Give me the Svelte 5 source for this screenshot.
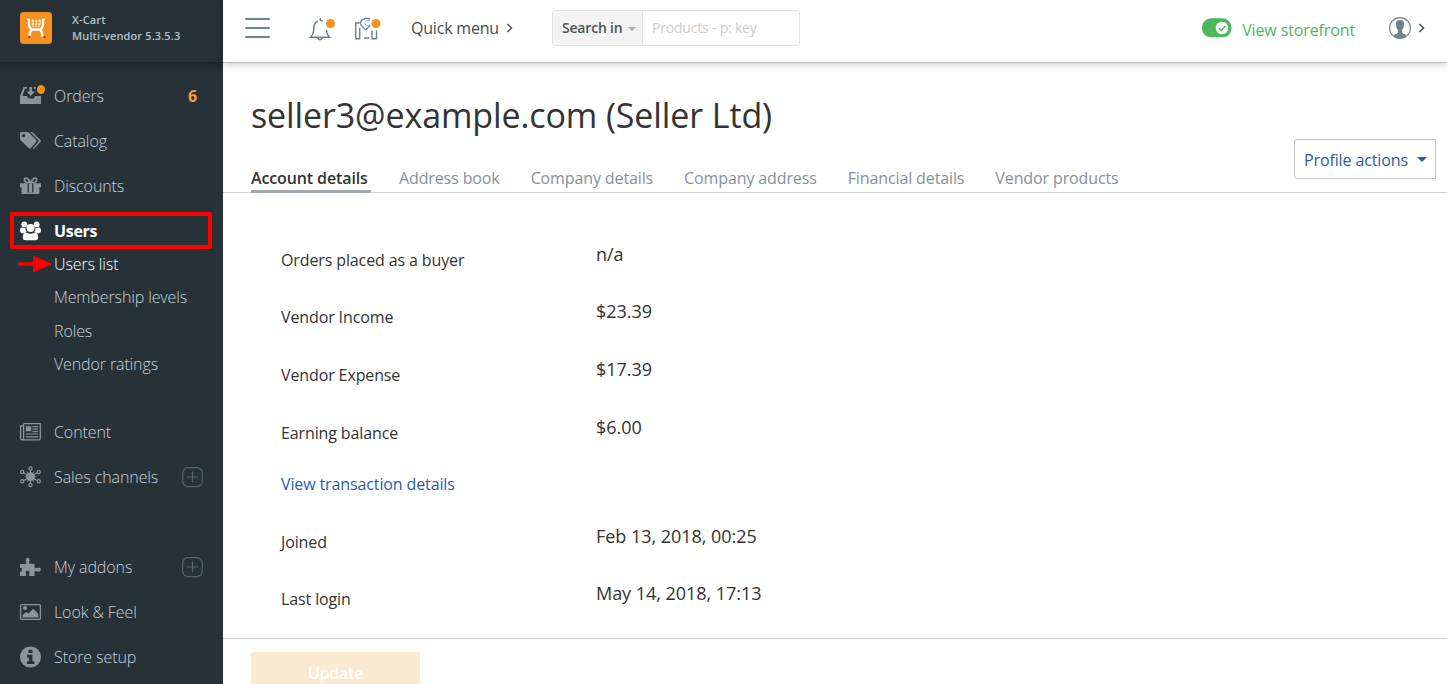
<script>
  const top = [
    { label: 'Orders', icon: 'orders', count: '6' },
    { label: 'Catalog', icon: 'tags' },
    { label: 'Discounts', icon: 'gift' },
    { label: 'Users', icon: 'users', active: true }
  ];
  const sub = ['Users list', 'Membership levels', 'Roles', 'Vendor ratings'];
  const middle = [
    { label: 'Content', icon: 'news' },
    { label: 'Sales channels', icon: 'hub', plus: true }
  ];
  const bottom = [
    { label: 'My addons', icon: 'puzzle', plus: true },
    { label: 'Look & Feel', icon: 'image' },
    { label: 'Store setup', icon: 'info' }
  ];
  const tabs = ['Account details', 'Address book', 'Company details', 'Company address', 'Financial details', 'Vendor products'];
  const rows = [
    ['Orders placed as a buyer', 'n/a'],
    ['Vendor Income', '$23.39'],
    ['Vendor Expense', '$17.39'],
    ['Earning balance', '$6.00']
  ];
  const dates = [
    ['Joined', 'Feb 13, 2018, 00:25'],
    ['Last login', 'May 14, 2018, 17:13']
  ];
  const satellites = [[11.5, 3.5], [19.8, 7], [19.8, 16.3], [11.5, 20], [3.2, 16.3], [3.2, 7]];
</script>

{#snippet icon(name)}
  <svg class="icon" width="26" height="24" viewBox="0 0 26 24" fill="currentColor">
    {#if name === 'orders'}
      <path d="M1 12 4.5 3H8v1.8H5.8L3.5 12H8l1.5 2.5h5L16 12h6v8H1z" />
      <path d="M10.3 3h2.8v4.5H16L11.7 12 7.5 7.5h2.8zM14.8 3h2v1.8h-2z" />
      <ellipse cx="22" cy="5.5" rx="4" ry="4.5" fill="#f5921f" />
    {:else if name === 'tags'}
      <path fill-rule="evenodd" d="M1 4.2Q1 3 2.2 3h6q1 0 1.8.8l7.3 7.3q.8.9 0 1.8l-5.6 6.3q-.8.8-1.7 0L1.8 11.5Q1 10.7 1 9.8zM4.6 5a1.6 1.6 0 1 0 .01 0z" />
      <path d="M11 3h1.6q.8 0 1.5.7l7.5 7.5q.8.8 0 1.6L15.5 19.6q-.9.8-1.9-.1l5.7-6.4q.9-1 0-2z" />
    {:else if name === 'gift'}
      <path d="M1 9.2h7.6v4H1zM2.5 13.2h6.1V20H3.5q-1 0-1-1zM14.4 9.2H22v4h-7.6zM14.4 13.2h6V19q0 1-1 1h-5z" />
      <path d="M9.9 9.2h3.2v9H9.9zM8 18.5h7V20H8z" />
      <path d="M11.3 9C9 4 7.5 3.6 6.3 4.2 4.2 5.5 6 8.5 8 8.5h7c2 0 3.8-3 1.7-4.3C15.5 3.6 14 4 11.5 9" fill="none" stroke="currentColor" stroke-width="1.7" />
    {:else if name === 'users'}
      <circle cx="5.3" cy="5.5" r="2.9" /><circle cx="17.7" cy="5.5" r="2.9" />
      <path d="M1 11.4q0-3 2-3 2 1.3 3.4.4-.2 2.4 1.3 4.2-1.4.2-2.2 1.2H2.7Q1 13.4 1 11.4zM22 11.4q0-3-2-3-2 1.3-3.4.4.2 2.4-1.3 4.2 1.4.2 2.2 1.2h2.8Q22 13.4 22 11.4z" />
      <circle cx="11.5" cy="8.9" r="4" />
      <path d="M3.8 18.8q0-5.3 3.5-5.3 4.2 2.4 8.4 0 3.5 0 3.5 5.3 0 2.4-2.6 2.4H6.4q-2.6 0-2.6-2.4z" />
    {:else if name === 'news'}
      <path d="M4.6 3.7h16.7v14.8q0 1.3-1.2 1.3H2.8q-1.2 0-1.2-1.4V6h3M4.6 4v14.3q0 1.5-1.5 1.5" fill="none" stroke="currentColor" stroke-width="1.3" />
      <path d="M6.8 6.2h5.4v5H6.8zM13.5 6h5.6v1.2h-5.6zM13.5 8.6h5.6v1.2h-5.6zM13.5 11h5.6v1.2h-5.6zM6.8 13.4h12.3v1.2H6.8zM6.8 16.2h12.3v1.2H6.8z" />
    {:else if name === 'hub'}
      <circle cx="11.5" cy="11.7" r="4.4" />
      {#each satellites as [x, y]}
        <path d="M11.5 11.7L{11.5 + (x - 11.5) * 0.82} {11.7 + (y - 11.7) * 0.82}" stroke="currentColor" stroke-width="1.1" />
        <circle cx={x} cy={y} r="1.6" fill="#263238" stroke="currentColor" stroke-width="1.2" />
      {/each}
      <path d="M5.7 11.7h11.6M8 6.3l7 10.8M15 6.3L8 17.1" stroke="currentColor" stroke-width=".8" />
    {:else if name === 'puzzle'}
      <path d="M1 9.5h5.2q1.6 0 1.2-1.3-.8-1-.7-2.2Q6.9 3.5 8.6 3.3q2 .1 2.1 2.3 0 1-.8 2.1-.5 1.5 1.1 1.6h4.6v3.3q.2 1.8 1.8 1 3.5-1.6 4.6 1.1-.3 3.6-3.7 2.4-2.5-1.2-2.7.8v3.6h-5q-1-.3-.6-1.4 1.6-3.2-1-3.7-3.2.1-2 3.2.7 1.3-.2 1.9H1v-4.2h1.8q-.2-2 .1-3.7H1z" transform="translate(0 -.6)" />
    {:else if name === 'image'}
      <rect x="1.6" y="4.6" width="19.8" height="14.8" rx="1" fill="none" stroke="currentColor" stroke-width="1.3" />
      <circle cx="6" cy="8" r="2" /><path d="M3.7 17.4v-2.7l3.8-2.8 2 1.7L14.2 8.8l5.1 5v3.6z" />
    {:else}
      <circle cx="11.5" cy="12" r="10.5" />
      <path class="cut" d="M9.5 4.7h4v3.2h-4zM8 9.8h5.5v6.5h1.8v2.6H8v-2.6h1.9v-3.9H8z" />
    {/if}
  </svg>
{/snippet}

{#snippet item(it)}
  <a class="item" class:active={it.active}>
    {@render icon(it.icon)}
    <span class="label">{it.label}</span>
    {#if it.count}<b class="count">{it.count}</b>{/if}
    {#if it.plus}
      <svg class="plus" width="21" height="21" viewBox="0 0 21 21" fill="none" stroke="#57646b" stroke-width="1.2"><rect x=".7" y=".6" width="19.6" height="19" rx="5.5" /><path d="M5 10h11M10.5 4.5v11" /></svg>
    {/if}
  </a>
{/snippet}

<div class="page">
  <aside>
    <div class="brand">
      <svg width="32" height="32" viewBox="0 0 32 32">
        <rect width="32" height="32" rx="4" fill="#f5921f" />
        <path d="M9 7.3V12q0 4.4 3.5 5.5h7q3.5-1.1 3.5-5.5V7.3M12.5 17.5Q9.6 18.8 9.6 24.4M19.5 17.5q2.9 1.3 2.9 6.9M12.5 17.5h7" fill="none" stroke="#fff" stroke-width="2.4" />
        <path d="M7 7.4h3M22 7.4h3" stroke="#fff" stroke-width="1.2" />
        <path d="M11.9 8.8h8.6M11.9 11.8h8.6" stroke="#fff" stroke-width="2" stroke-dasharray="2 1.3" />
        <path d="M12.3 14.2h7.6" stroke="#fff" stroke-width="1" stroke-dasharray="2 .8" />
        <circle cx="9.3" cy="25" r="1.2" fill="#b83a17" /><circle cx="24.6" cy="25" r="1.2" fill="#b83a17" />
      </svg>
      <div class="version">X-Cart<br />Multi-vendor 5.3.5.3</div>
    </div>
    <nav>
      {#each top as it}{@render item(it)}{/each}
      <div class="sub">
        {#each sub as s, i}<a class:current={i === 0}>{s}</a>{/each}
      </div>
      <div class="group">{#each middle as it}{@render item(it)}{/each}</div>
      <div class="group last">{#each bottom as it}{@render item(it)}{/each}</div>
      <div class="frame"></div>
      <svg class="arrow" width="36" height="18" viewBox="0 0 36 18" fill="#f00"><path d="M2 7.2h14V0.5L35.5 9 16 17.5v-6.7H2q-2-1.8 0-3.6z" /></svg>
    </nav>
  </aside>

  <section>
    <header>
      <svg class="burger" width="26" height="22" viewBox="0 0 26 22" stroke="#6d838f" stroke-width="2" stroke-linecap="round"><path d="M1 2h23M1 11h23M1 20h23" /></svg>
      <svg class="bell" width="28" height="26" viewBox="0 0 28 26" fill="none" stroke="#6d838f" stroke-width="1.5">
        <path d="M9 4.2Q5.1 5.8 4.8 10v3.2Q4.6 17 1.4 20.3h19.2Q18 17.5 17.6 14v-1.2M11.3 1v2.2q1.6 0 2.2 1.3M8.3 20.6q2.6 4.2 5.4 0" />
        <circle cx="21.5" cy="6.5" r="4.5" fill="#f5921f" stroke="none" />
      </svg>
      <svg class="map" width="28" height="26" viewBox="0 0 28 26" fill="none" stroke="#6d838f" stroke-width="1.4">
        <path d="M5.2 6H1.7v15.7h4V10.8M18 13.5v8.2h4.5v-8.2M10 21h5.3M16 2.4Q14 1 11.2 1.5 7 2.4 6.2 6.4q.4 1.6 5.6 6.4l4.2-4.4" />
        <path d="M16 3.6q-3.6-.8-4.8.8-1 2.2.5 3.6 1.6 1 3.6.2" stroke-width=".8" opacity=".65" />
        <circle cx="22" cy="6.5" r="4.5" fill="#f5921f" stroke="none" />
      </svg>
      <span class="quick">Quick menu</span>
      <svg class="chev" width="7" height="10" viewBox="0 0 7 10"><path d="M1.5 1l4 4-4 4" fill="none" stroke="#444c50" stroke-width="1.4" /></svg>
      <div class="search">
        <span class="scope"><span>Search in</span><i></i></span><span class="query">Products - p: key</span>
      </div>
      <svg class="toggle" width="30" height="20" viewBox="0 0 30 20"><rect y=".3" width="29.5" height="19" rx="9" fill="#4cb85c" /><circle cx="20" cy="10" r="6.3" fill="#fff" /><path d="M16.7 10l2.5 2.4 4.2-4.5" fill="none" stroke="#4cb85c" stroke-width="1.5" /></svg>
      <span class="store">View storefront</span>
      <svg class="avatar" width="22" height="22" viewBox="0 0 22 22">
        <circle cx="11" cy="11" r="10.4" fill="#fff" stroke="#6d838f" stroke-width="1.1" />
        <path d="M11 3.1q4.2.1 4 4.2.1 3.8-1.8 5.5v2.6q.3 1.2 4.3 2.2Q15.2 21.4 11 21.5 6.8 21.4 4.5 17.6q4-1 4.3-2.2v-2.6Q6.9 11.1 7 7.3 6.8 3.2 11 3.1z" fill="#6d838f" />
      </svg>
      <svg class="chev end" width="7" height="10" viewBox="0 0 7 10"><path d="M1.5 1l4 4-4 4" fill="none" stroke="#444c50" stroke-width="1.5" /></svg>
    </header>

    <main>
      <div class="titlebar">
        <div>
          <h1>seller3@example.com (Seller Ltd)</h1>
          <div class="tabs">
            {#each tabs as t, i}<a class:selected={i === 0}>{t}</a>{/each}
          </div>
        </div>
        <button class="actions"><span>Profile actions</span><i></i></button>
      </div>
      <div class="details">
        {#each rows as [k, v]}<div class="row"><span class="key">{k}</span><span class="val">{v}</span></div>{/each}
        <a class="link"><span class="key">View transaction details</span></a>
        {#each dates as [k, v]}<div class="row"><span class="key">{k}</span><span class="val">{v}</span></div>{/each}
      </div>
      <footer><button class="update">Update</button></footer>
    </main>
  </section>
</div>

<style>
  :global(body) { overflow: hidden; background: #fff; }
  .page { display: grid; grid-template-columns: 223px 1fr; height: 684px; overflow: hidden; font-family: 'Open Sans', sans-serif; font-size: 16px; letter-spacing: -0.12px; color: #333; }
  .page * { box-sizing: border-box; }
  svg { display: block; flex: none; }
  span, a, button { white-space: nowrap; }
  aside { background: #263238; color: #c6d1da; height: 684px; overflow: hidden; }
  .brand { height: 62px; display: flex; padding: 12px 0 0 20px; }
  .version { margin: 0 0 0 20px; font-size: 11px; line-height: 16px; font-weight: 600; letter-spacing: 0.13px; color: #b3c0ca; white-space: nowrap; }
  nav { position: relative; height: 622px; padding-top: 11px; background: linear-gradient(#1b2327, #263238 10px); }
  .item { display: flex; align-items: center; height: 45px; padding: 1px 20px 0 19px; font-weight: 300; }
  .icon { width: 26px; margin-right: 9px; color: #8a949e; overflow: visible; }
  .cut { fill: #263238; }
  .label { flex: 1; letter-spacing: -0.09px; }
  .active { font-weight: 700; color: #fff; }
  .active .label { letter-spacing: -0.3px; }
  .active .icon { color: #fff; }
  .count { color: #ff9a35; font-weight: 700; margin-right: 6px; }
  .sub { display: flex; flex-direction: column; margin-top: -6px; height: 134px; padding: 1px 0 0 54px; }
  .sub a { flex: none; height: 33.3px; line-height: 33.3px; font-weight: 300; }
  .sub .current { color: #fff; }
  .group { margin-top: 28px; }
  .group.last { margin-top: 45px; }
  .frame { position: absolute; left: 10px; top: 150px; width: 202px; height: 37px; border: 4px solid #f00; border-radius: 2px; }
  .arrow { position: absolute; left: 17px; top: 193px; }

  section { min-width: 0; }
  header { height: 63px; display: flex; align-items: center; border-bottom: 1px solid #b9bcbb; padding: 0 22px 6px 22px; box-shadow: 0 1px 9px rgba(0, 0, 0, 0.22); }
  .bell { margin: 4px 0 0 38px; }
  .map { margin: 4px 0 0 17px; }
  .quick { width: 88px; margin-left: 29px; color: #444c50; letter-spacing: -0.2px; }
  .chev { margin-left: 7px; }
  .search { display: flex; width: 248px; height: 36px; margin-left: 39px; border: 1px solid #e3e3e3; border-radius: 3px; font-size: 14px; line-height: 34px; letter-spacing: -0.2px; overflow: hidden; }
  .scope { display: flex; align-items: center; width: 90px; padding-left: 9px; background: #f3f3f3; border-right: 1px solid #e3e3e3; color: #4d5458; font-weight: 600; }
  i { width: 0; height: 0; border: 4px solid transparent; border-bottom: 0; border-top-color: #aaa; margin: 2px 0 0 6px; }
  .query { padding-left: 9px; color: #ccc; }
  .toggle { margin-left: auto; }
  .store { margin: 3px 0 0 10px; color: #4cb85c; }
  .avatar { margin-left: 34px; }

  main { height: 621px; display: flex; flex-direction: column; }
  .titlebar { display: flex; justify-content: space-between; height: 130px; padding: 28px 11px 0 28px; border-bottom: 1px solid #d2d2d2; }
  h1 { margin: 0; font-size: 34px; line-height: 48px; font-weight: 400; letter-spacing: -0.11px; white-space: nowrap; }
  .tabs { display: flex; margin-top: 25px; color: #84929b; }
  .tabs a { height: 29px; line-height: 28px; margin-right: 31px; }
  .tabs .selected { color: #333; font-weight: 600; width: 120px; margin-right: 28px; border-bottom: 3px solid #a1a9b1; }
  .actions { display: flex; align-items: center; margin-top: 48px; width: 142px; height: 40px; padding: 2px 9px 0; background: #fff; border: 1px solid #c6c6c6; border-radius: 3px 0 0 3px; font: inherit; letter-spacing: inherit; color: #2a5caa; }
  .actions i { border-width: 5px; border-bottom: 0; border-top-color: #2a5caa; margin: -2px 0 0 9px; }
  .details { flex: 1; padding: 37.8px 0 0 58px; }
  .row { height: 57.6px; display: grid; grid-template-columns: 315px auto; justify-content: start; align-items: start; }
  .key { line-height: 24px; padding-top: 17px; display: block; }
  .val { line-height: 24px; padding-top: 11px; font-size: 18px; letter-spacing: -0.04px; }
  .link { display: block; height: 51.6px; color: #2a5caa; }
  .link .key { padding-top: 10.6px; }
  footer { height: 46px; border-top: 1px solid #d2d2d2; padding: 13px 0 0 28px; overflow: hidden; }
  .update { display: block; width: 169px; height: 42px; border: 0; border-radius: 3px; background: #fce9d1; color: #fff; font: 600 16px 'Open Sans', sans-serif; letter-spacing: -0.25px; }
</style>
